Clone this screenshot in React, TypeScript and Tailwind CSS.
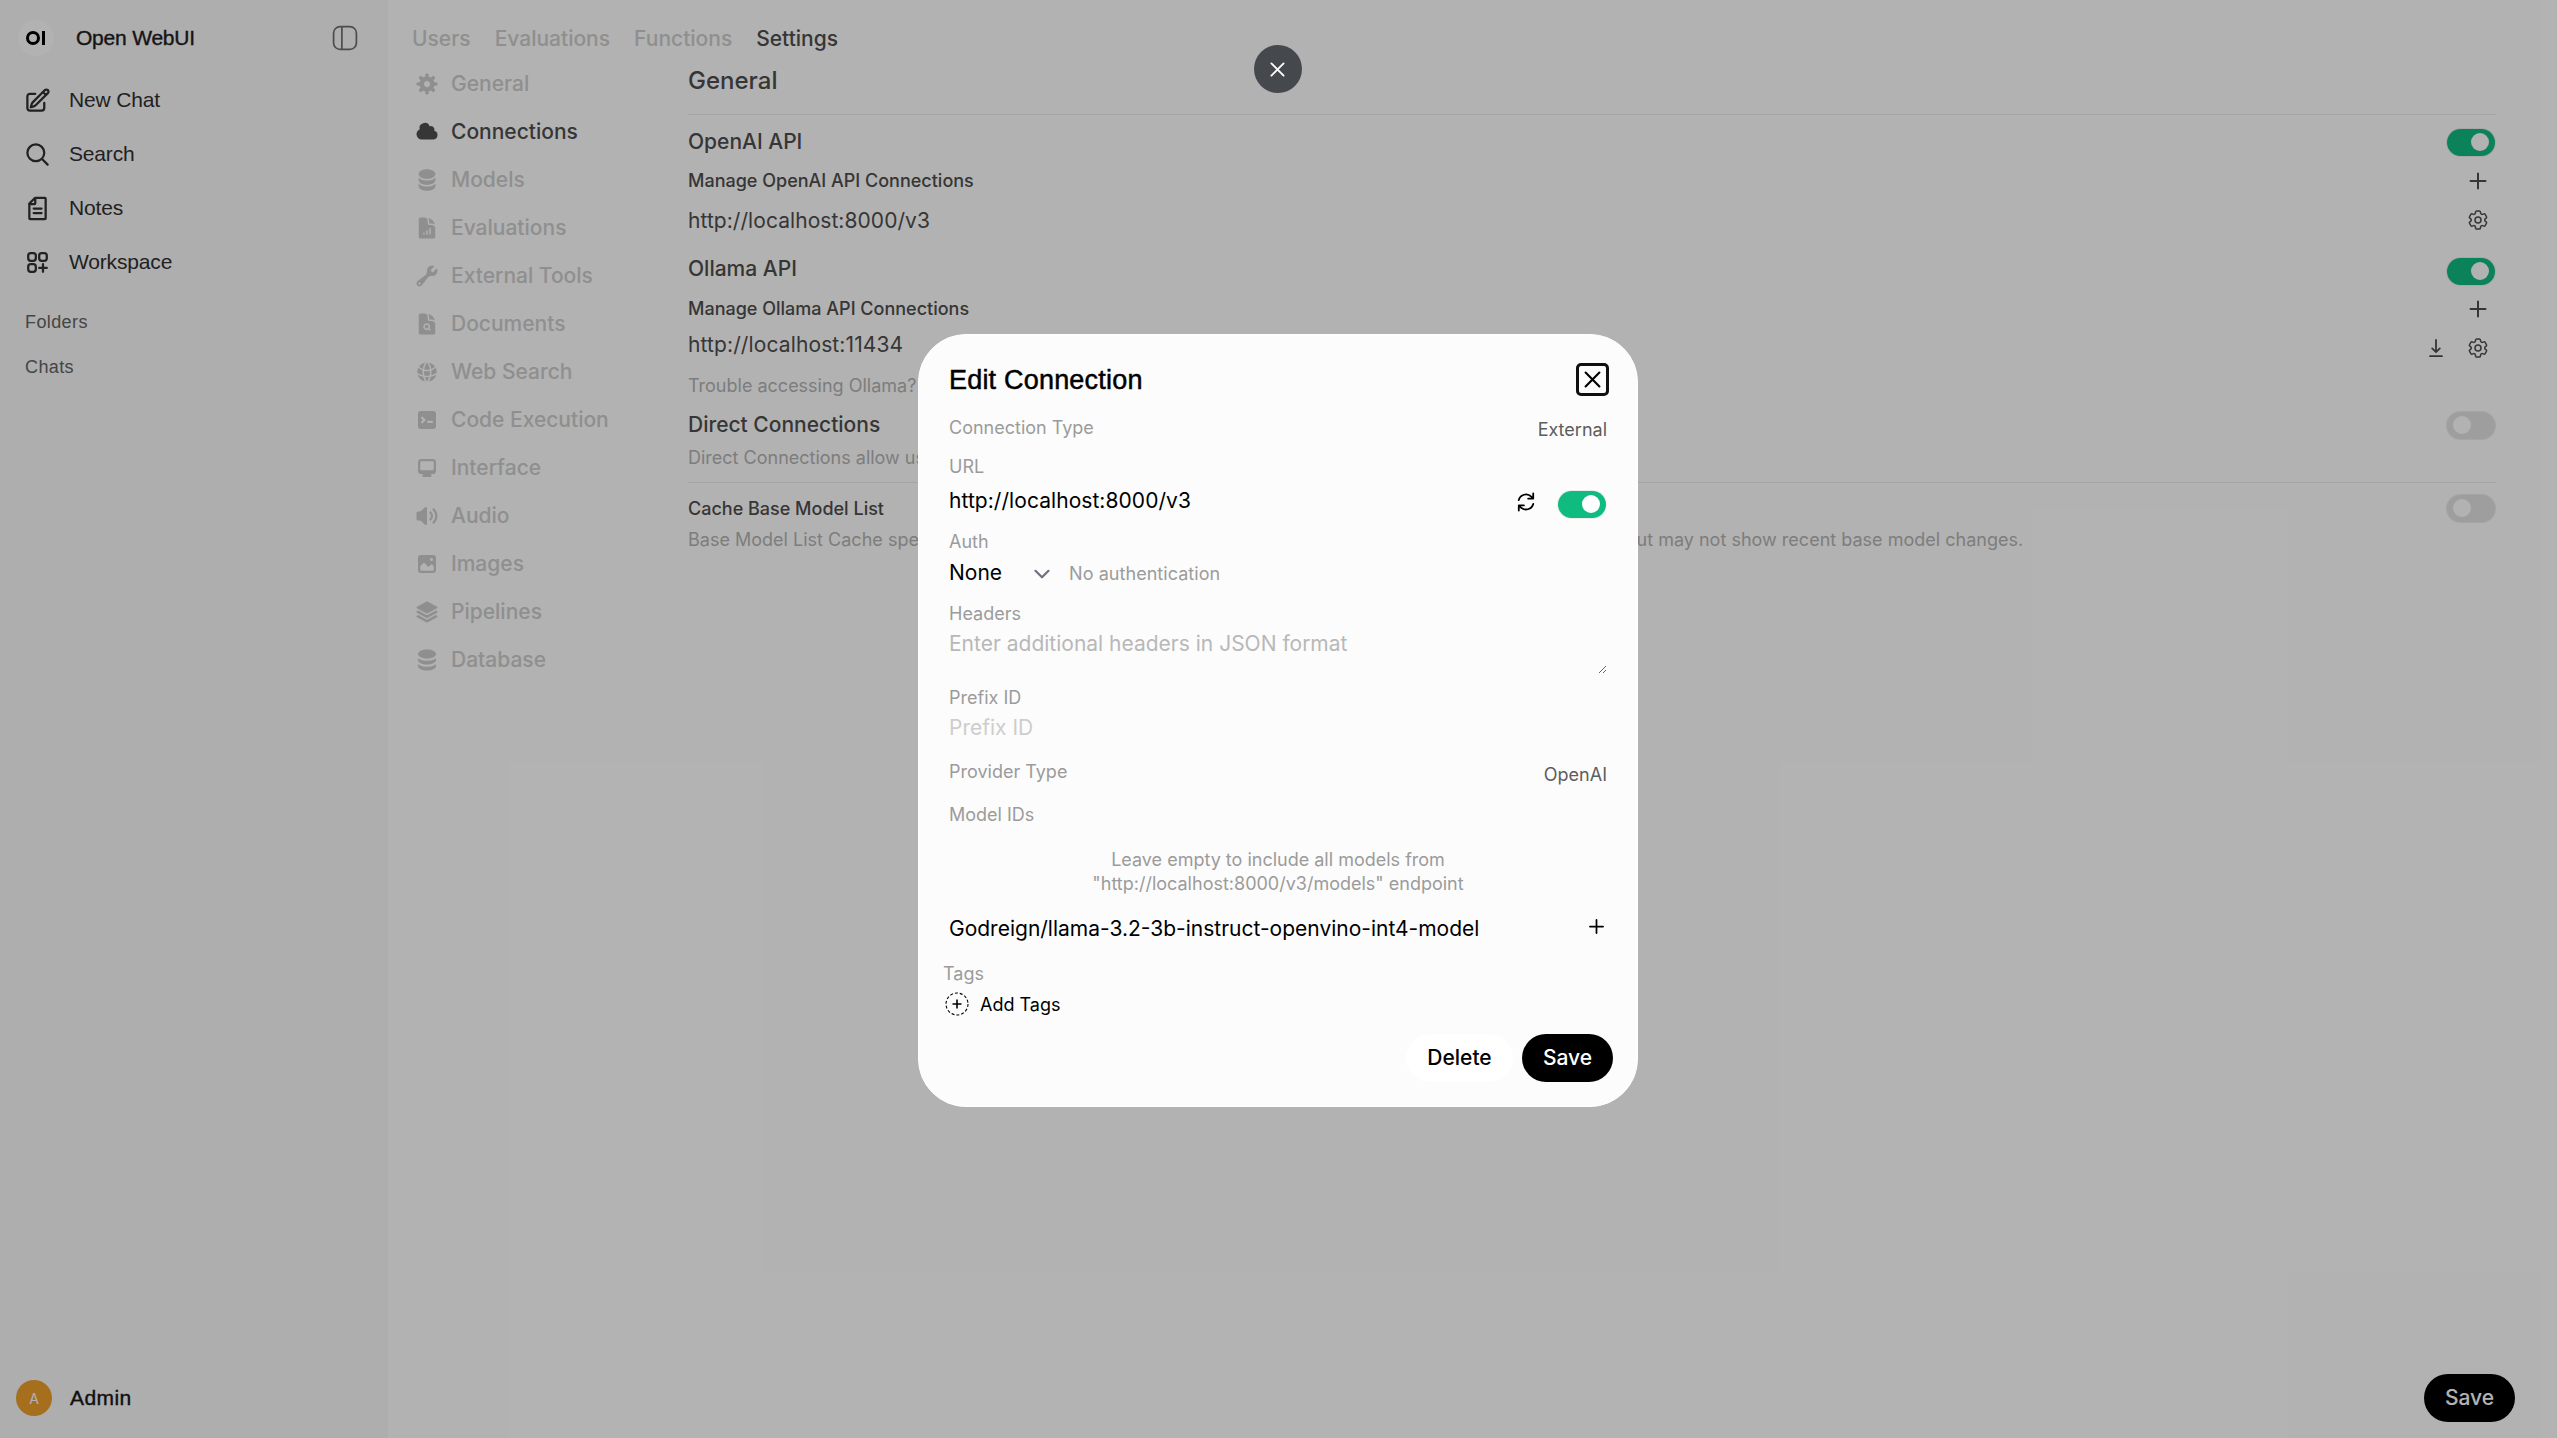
import type { ReactNode } from "react";
import {
  HiDocumentChartBar,
  HiDocumentMagnifyingGlass,
  HiGlobeAlt,
  HiOutlineCog6Tooth,
  HiOutlineMagnifyingGlass,
  HiOutlinePencilSquare,
  HiOutlineSquaresPlus,
  HiSquare3Stack3D,
} from "react-icons/hi2";

const SANS = "font-['Inter',sans-serif]";
const DISPLAY = "font-['Liberation_Sans',Arial,sans-serif]";

/* ---------- icons ---------- */

function Solid({ paths, box = "0 0 16 16" }: { paths: string[]; box?: string }) {
  return (
    <svg viewBox={box} fill="currentColor" className="size-6 shrink-0">
      {paths.map((d) => (
        <path key={d} d={d} fillRule="evenodd" clipRule="evenodd" />
      ))}
    </svg>
  );
}

const GEAR = [
  "M6.955 1.45A.5.5 0 0 1 7.452 1h1.096a.5.5 0 0 1 .497.45l.17 1.699c.484.12.94.312 1.356.562l1.321-1.081a.5.5 0 0 1 .67.033l.774.775a.5.5 0 0 1 .034.67l-1.08 1.32c.25.417.44.873.561 1.357l1.699.17a.5.5 0 0 1 .45.497v1.096a.5.5 0 0 1-.45.497l-1.699.17c-.12.484-.312.94-.562 1.356l1.082 1.322a.5.5 0 0 1-.034.67l-.774.774a.5.5 0 0 1-.67.033l-1.322-1.08c-.416.25-.872.44-1.356.561l-.17 1.699a.5.5 0 0 1-.497.45H7.452a.5.5 0 0 1-.497-.45l-.17-1.699a4.973 4.973 0 0 1-1.356-.562L4.108 13.37a.5.5 0 0 1-.67-.033l-.774-.775a.5.5 0 0 1-.034-.67l1.08-1.32a4.971 4.971 0 0 1-.561-1.357l-1.699-.17A.5.5 0 0 1 1 8.548V7.452a.5.5 0 0 1 .45-.497l1.699-.17c.12-.484.312-.94.562-1.356L2.629 4.107a.5.5 0 0 1 .034-.67l.774-.774a.5.5 0 0 1 .67-.033L5.43 3.71a4.97 4.97 0 0 1 1.356-.561l.17-1.699ZM6 8c0 .538.212 1.026.558 1.385l.057.057a2 2 0 0 0 2.828-2.828l-.058-.056A2 2 0 0 0 6 8Z",
];
const CLOUD = [
  "M1 9.5A3.5 3.5 0 0 0 4.5 13H12a3 3 0 0 0 .917-5.857 2.503 2.503 0 0 0-3.198-3.019 3.5 3.5 0 0 0-6.628 2.171A3.5 3.5 0 0 0 1 9.5Z",
];
const STACK_20 = [
  "M10 1c3.866 0 7 1.79 7 4s-3.134 4-7 4-7-1.79-7-4 3.134-4 7-4zm5.694 8.13c.464-.264.91-.583 1.306-.952V10c0 2.21-3.134 4-7 4s-7-1.79-7-4V8.178c.396.37.842.688 1.306.953C5.838 10.006 7.854 10.5 10 10.5s4.162-.494 5.694-1.37zM3 13.179V15c0 2.21 3.134 4 7 4s7-1.79 7-4v-1.822c-.396.37-.842.688-1.306.953-1.532.875-3.548 1.369-5.694 1.369s-4.162-.494-5.694-1.37A7.009 7.009 0 013 13.179z",
];
const WRENCH = [
  "M11.5 8a3.5 3.5 0 0 0 3.362-4.476c-.094-.325-.497-.39-.736-.15L12.099 5.4a.48.48 0 0 1-.653.033 8.554 8.554 0 0 1-.879-.879.48.48 0 0 1 .033-.653l2.027-2.028c.24-.239.175-.642-.15-.736a3.502 3.502 0 0 0-4.476 3.427c.018.99-.133 2.093-.914 2.7l-5.31 4.13a2.015 2.015 0 1 0 2.828 2.827l4.13-5.309c.607-.78 1.71-.932 2.7-.914L11.5 8ZM3 13.75a.75.75 0 1 0 0-1.5.75.75 0 0 0 0 1.5Z",
];
const TERMINAL = [
  "M2 4a2 2 0 0 1 2-2h8a2 2 0 0 1 2 2v8a2 2 0 0 1-2 2H4a2 2 0 0 1-2-2V4Zm2.22 1.97a.75.75 0 0 0 0 1.06l.97.97-.97.97a.75.75 0 1 0 1.06 1.06l1.5-1.5a.75.75 0 0 0 0-1.06l-1.5-1.5a.75.75 0 0 0-1.06 0ZM8.75 8.5a.75.75 0 0 0 0 1.5h2.5a.75.75 0 0 0 0-1.5h-2.5Z",
];
const MONITOR = [
  "M2 4.25A2.25 2.25 0 0 1 4.25 2h7.5A2.25 2.25 0 0 1 14 4.25v5.5A2.25 2.25 0 0 1 11.75 12h-1.312c.1.128.21.248.328.36a.75.75 0 0 1 .234.545v.345a.75.75 0 0 1-.75.75h-4.5a.75.75 0 0 1-.75-.75v-.345a.75.75 0 0 1 .234-.545c.118-.111.228-.232.328-.36H4.25A2.25 2.25 0 0 1 2 9.75v-5.5Zm2.25-.75a.75.75 0 0 0-.75.75v4.5c0 .414.336.75.75.75h7.5a.75.75 0 0 0 .75-.75v-4.5a.75.75 0 0 0-.75-.75h-7.5Z",
];
const SPEAKER = [
  "M7.557 2.066A.75.75 0 0 1 8 2.75v10.5a.75.75 0 0 1-1.248.56L3.59 11H2a1 1 0 0 1-1-1V6a1 1 0 0 1 1-1h1.59l3.162-2.81a.75.75 0 0 1 .805-.124ZM12.95 3.05a.75.75 0 1 0-1.06 1.06 5.5 5.5 0 0 1 0 7.78.75.75 0 1 0 1.06 1.06 7 7 0 0 0 0-9.9Z",
  "M10.828 5.172a.75.75 0 1 0-1.06 1.06 2.5 2.5 0 0 1 0 3.536.75.75 0 1 0 1.06 1.06 4 4 0 0 0 0-5.656Z",
];
const PHOTO = [
  "M2 4a2 2 0 0 1 2-2h8a2 2 0 0 1 2 2v8a2 2 0 0 1-2 2H4a2 2 0 0 1-2-2V4Zm10.5 5.707a.5.5 0 0 0-.146-.353l-1-1a.5.5 0 0 0-.708 0L9.354 9.646a.5.5 0 0 1-.708 0L6.354 7.354a.5.5 0 0 0-.708 0l-2 2a.5.5 0 0 0-.146.353V12a.5.5 0 0 0 .5.5h8a.5.5 0 0 0 .5-.5V9.707ZM12 5a1 1 0 1 1-2 0 1 1 0 0 1 2 0Z",
];
const STACK_16 = [
  "M8 7c3.314 0 6-1.343 6-3s-2.686-3-6-3-6 1.343-6 3 2.686 3 6 3Z",
  "M8 8.5c1.84 0 3.579-.37 4.914-1.037A6.33 6.33 0 0 0 14 6.78V8c0 1.657-2.686 3-6 3S2 9.657 2 8V6.78c.346.273.72.5 1.087.683C4.42 8.131 6.16 8.5 8 8.5Z",
  "M8 12.5c1.84 0 3.579-.37 4.914-1.037.366-.183.74-.41 1.086-.684V12c0 1.657-2.686 3-6 3s-6-1.343-6-3v-1.22c.346.273.72.5 1.087.683C4.42 12.131 6.16 12.5 8 12.5Z",
];
const REFRESH = [
  "M15.312 11.424a5.5 5.5 0 01-9.201 2.466l-.312-.311h2.433a.75.75 0 000-1.5H3.989a.75.75 0 00-.75.75v4.242a.75.75 0 001.5 0v-2.43l.31.31a7 7 0 0011.712-3.138.75.75 0 00-1.449-.39zm1.23-3.723a.75.75 0 00.219-.53V2.929a.75.75 0 00-1.5 0V5.36l-.31-.31A7 7 0 003.239 8.188a.75.75 0 101.448.389A5.5 5.5 0 0113.89 6.11l.311.31h-2.432a.75.75 0 000 1.5h4.243a.75.75 0 00.53-.219z",
];

function NoteIcon() {
  return (
    <svg viewBox="0 0 24 24" fill="none" stroke="currentColor" strokeWidth="2" strokeLinecap="round" strokeLinejoin="round" className="size-[27px]">
      <path d="M4.75 20.6V7.6L9.7 2.65H18.5a.75.75 0 0 1 .75.75v17.2a.75.75 0 0 1-.75.75H5.5a.75.75 0 0 1-.75-.75Z" />
      <path d="M10 2.9v4.4a.7.7 0 0 1-.7.7H5M8.6 12.1h7M8.6 16h7" />
    </svg>
  );
}

function PanelIcon() {
  return (
    <svg viewBox="0 0 26 26" fill="none" stroke="currentColor" strokeWidth="1.7" className="size-[26px]">
      <rect x="1.6" y="1.6" width="22.8" height="22.8" rx="6.5" />
      <path d="M9.9 1.6v22.8" />
    </svg>
  );
}

function PlusIcon({ className }: { className: string }) {
  return (
    <svg viewBox="0 0 24 24" fill="none" stroke="currentColor" strokeWidth="2" strokeLinecap="round" className={className}>
      <path d="M12 4.5v15M4.5 12h15" />
    </svg>
  );
}

function CrossIcon({ className }: { className: string }) {
  return (
    <svg viewBox="0 0 16 16" fill="none" stroke="currentColor" strokeWidth="2" strokeLinecap="round" className={className}>
      <path d="M1.5 1.5l13 13M14.5 1.5l-13 13" />
    </svg>
  );
}

function DownloadIcon() {
  return (
    <svg viewBox="0 0 24 24" fill="none" stroke="currentColor" strokeWidth="1.8" strokeLinecap="round" strokeLinejoin="round" className="size-6">
      <path d="M12 4v12M8.2 12.4l3.8 3.8 3.8-3.8M6 20.2h12" />
    </svg>
  );
}

/* ---------- controls ---------- */

function Toggle({ on, className = "" }: { on?: boolean; className?: string }) {
  return on ? (
    <span className={`flex h-[27px] w-12 shrink-0 items-center justify-end rounded-full bg-[#10bb80] pr-1.5 shadow-[0_0_0_1px_#00000010] ${className}`}>
      <span className="mb-px size-[18px] rounded-full bg-white" />
    </span>
  ) : (
    <span className={`flex h-[27px] w-12 shrink-0 items-center rounded-full bg-[#e3e3e3] pl-1.5 shadow-[0_0_0_1px_#ececec] ${className}`}>
      <span className="mb-px size-[18px] rounded-full bg-white" />
    </span>
  );
}

function SidebarItem({ icon, label }: { icon: ReactNode; label: string }) {
  return (
    <div className="flex h-[54px] items-center gap-[18px] pl-6 text-[21px] text-[#303030]">
      <span className="flex size-[27px] items-center justify-center">{icon}</span>
      <span className="tracking-[-0.008em]">{label}</span>
    </div>
  );
}

const NAV: { label: string; icon: ReactNode; active?: boolean }[] = [
  { label: "General", icon: <Solid paths={GEAR} /> },
  { label: "Connections", icon: <Solid paths={CLOUD} />, active: true },
  { label: "Models", icon: <Solid paths={STACK_20} box="0 0 20 20" /> },
  { label: "Evaluations", icon: <HiDocumentChartBar className="size-6" /> },
  { label: "External Tools", icon: <Solid paths={WRENCH} /> },
  { label: "Documents", icon: <HiDocumentMagnifyingGlass className="size-6" /> },
  { label: "Web Search", icon: <HiGlobeAlt className="size-6" /> },
  { label: "Code Execution", icon: <Solid paths={TERMINAL} /> },
  { label: "Interface", icon: <Solid paths={MONITOR} /> },
  { label: "Audio", icon: <Solid paths={SPEAKER} /> },
  { label: "Images", icon: <Solid paths={PHOTO} /> },
  { label: "Pipelines", icon: <HiSquare3Stack3D className="size-6" /> },
  { label: "Database", icon: <Solid paths={STACK_16} /> },
];

function Sidebar() {
  return (
    <aside className={`flex w-[388px] shrink-0 flex-col bg-[#f9f9f9] ${DISPLAY}`}>
      <div className="flex h-[73px] items-center pt-[3px] pr-[30px] pl-[18px]">
        <span className="flex size-9 items-center justify-center gap-[2px] rounded-full bg-white pr-0.5">
          <span className="size-[14px] rounded-full border-[3px] border-black" />
          <span className="h-[14px] w-[3px] bg-black" />
        </span>
        <span className="ml-[22px] grow text-[21px] tracking-[-0.01em] text-[#1f1f1f] [-webkit-text-stroke:0.4px]">Open WebUI</span>
        <span className="text-[#6e6e6e]">
          <PanelIcon />
        </span>
      </div>
      <nav className="flex flex-col">
        <SidebarItem icon={<HiOutlinePencilSquare className="size-[27px]" strokeWidth={2} />} label="New Chat" />
        <SidebarItem icon={<HiOutlineMagnifyingGlass className="size-[27px]" strokeWidth={2} />} label="Search" />
        <SidebarItem icon={<NoteIcon />} label="Notes" />
        <SidebarItem icon={<HiOutlineSquaresPlus className="size-[27px]" strokeWidth={2} />} label="Workspace" />
      </nav>
      <div className="mt-[11px] flex grow flex-col pl-[25px] text-[18px] tracking-[0.4px] text-[#636363]">
        <span className="flex h-[45px] items-center">Folders</span>
        <span className="flex h-[45px] items-center">Chats</span>
      </div>
      <div className="flex items-center gap-[18px] pb-[22px] pl-4">
        <span className={`flex size-9 items-center justify-center rounded-full bg-[#eca02c] text-[14px] text-white ${SANS}`}>A</span>
        <span className="text-[21px] tracking-[0.4px] text-[#171717] [-webkit-text-stroke:0.4px]">Admin</span>
      </div>
    </aside>
  );
}

function SettingsPanel() {
  return (
    <section className="flex grow flex-col justify-between pr-[42px] pb-4 text-[#4e4e4e]">
      <div className="flex flex-col pr-[19px]">
        <div className="flex h-[54px] items-center pb-3 text-[24px] font-medium">General</div>
        <div className="h-px bg-[#ececec]" />

        <div className="flex h-[54px] items-center justify-between pr-px text-[21px] font-medium">
          OpenAI API
          <Toggle on className="mt-px" />
        </div>
        <div className="flex h-6 items-center justify-between pr-1.5 text-[18px] font-medium">
          <span className="mb-px">Manage OpenAI API Connections</span>
          <PlusIcon className="size-6" />
        </div>
        <div className="flex h-[54px] items-center justify-between pr-1.5 text-[21px]">
          <span className="mt-0.5 tracking-[0.06px]">http://localhost:8000/v3</span>
          <HiOutlineCog6Tooth className="size-6" />
        </div>

        <div className="flex h-[43px] items-center justify-between pr-px text-[21px] font-medium">
          Ollama API
          <Toggle on className="mt-1.5" />
        </div>
        <div className="flex h-[37px] items-center justify-between pr-1.5 text-[18px] font-medium">
          Manage Ollama API Connections
          <PlusIcon className="size-6" />
        </div>
        <div className="flex h-[35px] items-center justify-between pr-1.5 text-[21px]">
          <span className="tracking-[0.12px]">http://localhost:11434</span>
          <span className="mt-[7px] flex gap-[18px]">
            <DownloadIcon />
            <HiOutlineCog6Tooth className="size-6" />
          </span>
        </div>
        <div className="flex h-[47px] items-center text-[18px] text-[#b4b4b4]">Trouble accessing Ollama? Click here for help.</div>

        <div className="flex h-[31px] items-center justify-between pr-px text-[21px] font-medium">
          Direct Connections
          <Toggle className="mt-0.5" />
        </div>
        <div className="flex h-[42px] items-center pb-[7px] text-[18px] text-[#b4b4b4]">
          Direct Connections allow users to connect to their own OpenAI compatible API endpoints.
        </div>
        <div className="h-px bg-[#ececec]" />

        <div className="flex h-[50px] items-center justify-between pr-px text-[18px] font-medium">
          Cache Base Model List
          <Toggle className="mt-px" />
        </div>
        <div className="text-[18px] leading-[13px] tracking-[0.01px] text-[#b4b4b4]">
          Base Model List Cache speeds up access by fetching base models only at startup or on settings save—faster, but may not show recent base model changes.
        </div>
      </div>
      <button className="h-12 w-[91px] self-end rounded-full bg-black text-[21px] font-medium text-white">Save</button>
    </section>
  );
}

function Page() {
  return (
    <div className="flex h-[1438px] w-[2557px] bg-white">
      <Sidebar />
      <main className="flex grow flex-col">
        <div className="flex h-[60px] items-center gap-6 pt-[18px] pl-6 text-[21px] font-medium text-[#cdcdcd]">
          <span>Users</span>
          <span>Evaluations</span>
          <span>Functions</span>
          <span className="text-[#4e4e4e]">Settings</span>
        </div>
        <div className="flex grow">
          <nav className="flex w-[300px] shrink-0 flex-col pl-[27px]">
            {NAV.map((item) => (
              <div
                key={item.label}
                className={`flex h-12 items-center gap-3 text-[21px] font-medium ${item.active ? "text-[#4e4e4e]" : "text-[#cdcdcd]"}`}
              >
                {item.icon}
                {item.label}
              </div>
            ))}
          </nav>
          <SettingsPanel />
        </div>
      </main>
    </div>
  );
}

function EditConnection() {
  return (
    <div className="flex h-[773px] w-[720px] flex-col rounded-[48px] border border-white bg-[#fcfcfc] pt-7 pr-[30px] pl-[30px] text-[18px] text-[#9b9b9b]">
      <div className="flex h-[33px] items-center justify-between">
        <h2 className={`mt-0.5 text-[27px] tracking-[0.2px] text-black [-webkit-text-stroke:0.5px] ${DISPLAY}`}>Edit Connection</h2>
        <button className="-mr-0.5 flex size-[33px] items-center justify-center rounded-[5px] border-[3px] border-[#101010] text-black">
          <CrossIcon className="size-[17px]" />
        </button>
      </div>

      <div className="mt-[18px] flex h-[27px] items-center justify-between">
        Connection Type
        <span className="mt-1 text-[#5d5d5d]">External</span>
      </div>

      <div className="mt-[13px] flex h-6 items-center">URL</div>
      <div className="flex h-[45px] items-center text-black">
        <span className="grow text-[21px] tracking-[0.06px]">http://localhost:8000/v3</span>
        <span className="mt-[3px] mr-5">
          <Solid paths={REFRESH} box="0 0 20 20" />
        </span>
        <Toggle on className="mt-2 mr-px" />
      </div>

      <div className="flex h-[37px] items-center">Auth</div>
      <div className="flex h-[25px] items-center">
        <span className="text-[21px] text-black">None</span>
        <svg viewBox="0 0 16 16" fill="none" stroke="#6b7280" strokeWidth="2.2" strokeLinecap="round" strokeLinejoin="round" className="mt-0.5 ml-8 size-4">
          <path d="M1.5 4.8L8 11.3l6.5-6.5" />
        </svg>
        <span className="mt-0.5 ml-[19px] tracking-[0.05px]">No authentication</span>
      </div>

      <div className="mt-4 flex h-[25px] items-center">Headers</div>
      <textarea
        className="h-12 w-full resize-y overflow-hidden bg-transparent text-[21px] leading-[35px] placeholder:text-[#b8b8b8]"
        placeholder="Enter additional headers in JSON format"
      />

      <div className="mt-[11px] flex h-[25px] items-center">Prefix ID</div>
      <input className="h-[35px] bg-transparent text-[21px] placeholder:text-[#cdcdcd]" placeholder="Prefix ID" />

      <div className="mt-[13px] flex h-[26px] items-center justify-between">
        Provider Type
        <span className="mt-[7px] text-[#5d5d5d]">OpenAI</span>
      </div>

      <div className="mt-[18px] flex h-[25px] items-center">Model IDs</div>
      <p className="mt-[21px] text-center leading-6">
        Leave empty to include all models from
        <br />
        "http://localhost:8000/v3/models" endpoint
      </p>
      <div className="mt-[15px] flex h-[35px] items-center justify-between text-[21px] text-black">
        Godreign/llama-3.2-3b-instruct-openvino-int4-model
        <PlusIcon className="mb-1 size-[21px]" />
      </div>

      <div className="mt-[15px] -ml-1.5 flex h-[25px] items-center">Tags</div>
      <div className="-ml-1 flex h-[37px] items-center gap-[11px] pb-px text-black">
        <svg viewBox="0 0 24 24" fill="none" stroke="currentColor" className="size-6">
          <circle cx="12" cy="12" r="11" strokeDasharray="3 1.94" strokeWidth="1.1" />
          <path d="M12 7.5v9M7.5 12h9" strokeWidth="1.6" />
        </svg>
        Add Tags
      </div>

      <div className="mt-[11px] -mr-1.5 flex justify-end gap-[9px] text-[21px] font-medium">
        <button className="h-12 w-[107px] rounded-full bg-white text-black">Delete</button>
        <button className="h-12 w-[91px] rounded-full bg-black text-white">Save</button>
      </div>
    </div>
  );
}

export default function App() {
  return (
    <div className={`relative h-[1438px] w-[2557px] overflow-hidden ${SANS}`}>
      <Page />
      <div className="absolute inset-0 flex items-center justify-center bg-black/30 pt-[3px] pr-px">
        <EditConnection />
      </div>
      <button className="absolute top-[45px] left-[1254px] flex size-12 items-center justify-center rounded-full bg-[#45494d] pr-px text-white">
        <CrossIcon className="size-[15px]" />
      </button>
    </div>
  );
}
